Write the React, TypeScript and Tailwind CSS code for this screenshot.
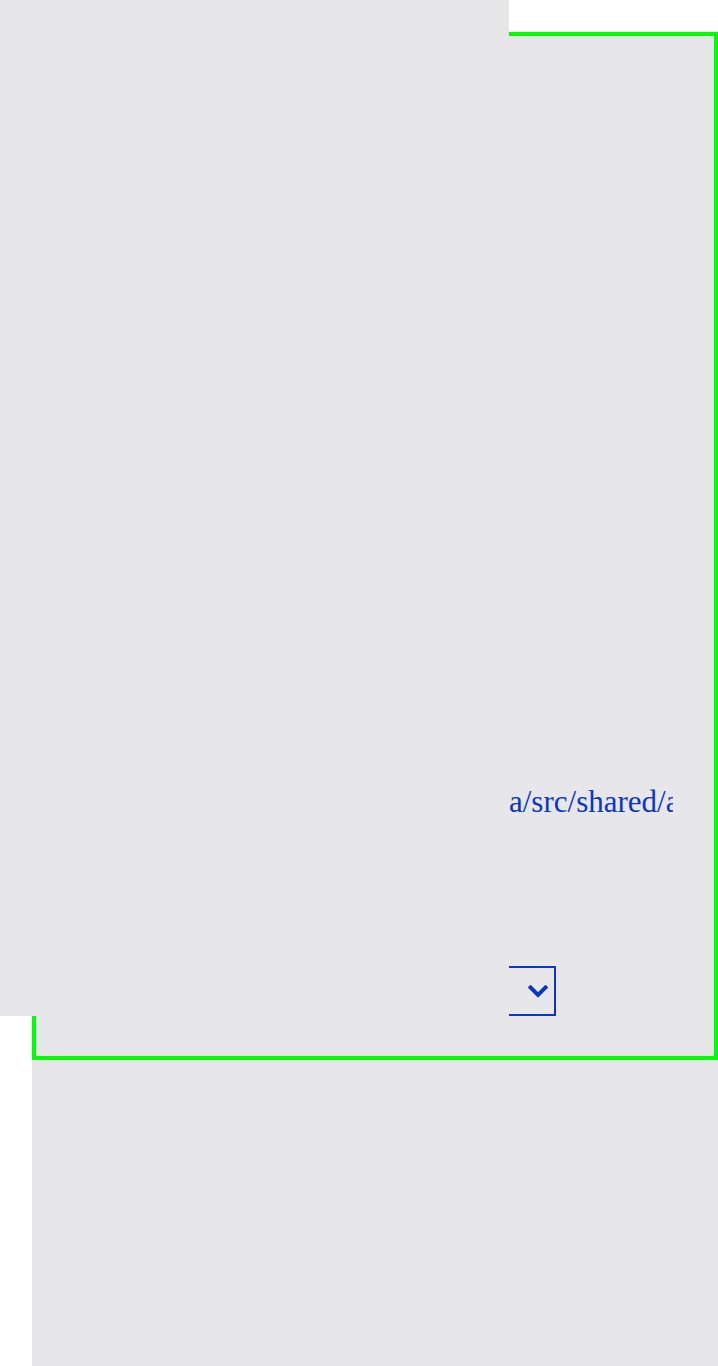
import React from 'react';

const Chevron = () => (
  <svg width="20" height="13" viewBox="0 0 20 13" fill="none">
    <polyline
      points="2.5,2.5 10,10 17.5,2.5"
      stroke="#0b36c9"
      strokeWidth="4"
      strokeLinecap="square"
      strokeLinejoin="miter"
    />
  </svg>
);

export default function App() {
  return (
    <div className="relative min-h-[1366px] overflow-hidden bg-white font-['Liberation_Serif',serif]">
      <div className="flex flex-col pl-8 pt-8">
        {/* framed panel */}
        <div className="h-[1028px] border-4 border-[#00ff00] bg-[#e7e7ea]">
          <div className="flex flex-col pl-[433px] pt-[749px]">
            <div className="ml-[40px] w-[164px] overflow-hidden whitespace-nowrap text-[31px] leading-[34px] text-[#0b36c9]">
              a/src/shared/assets/icons
            </div>
            <div className="mt-[147px] flex h-[50px] w-[87px] items-center justify-end border-2 border-[#0b36c9] pr-[6px]">
              <Chevron />
            </div>
          </div>
        </div>
        <div className="h-[320px] bg-[#e7e7ea]" />
      </div>

      {/* overlay sheet */}
      <div className="absolute left-0 top-0 h-[1016px] w-[509px] bg-[#e7e7ea]" />
    </div>
  );
}
